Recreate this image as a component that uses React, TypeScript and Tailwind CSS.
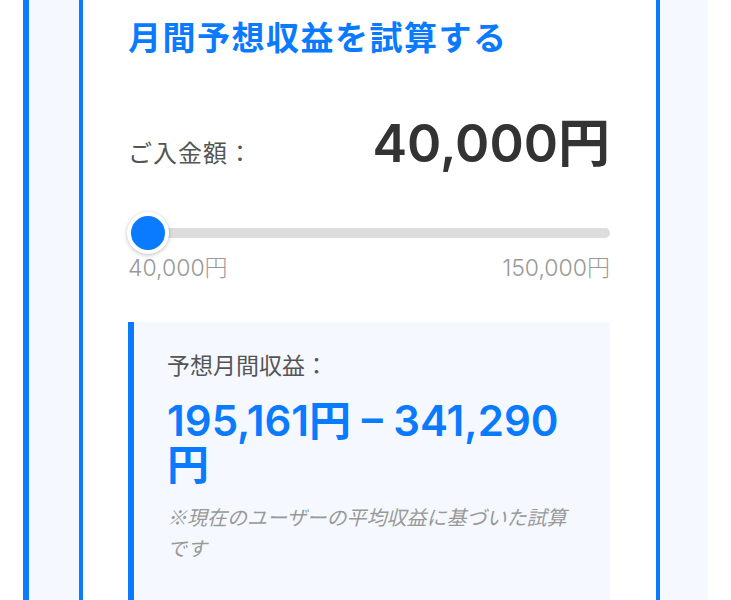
import React, { useState } from 'react'

const FONT = 'Inter, "Noto Sans CJK JP", sans-serif'
const JP = '"Noto Sans CJK JP", sans-serif'
const MIN = 40000
const MAX = 150000

const yen = (n: number) => n.toLocaleString('ja-JP') + '円'

export default function App() {
  const [amount] = useState(40000)
  const pct = ((amount - MIN) / (MAX - MIN)) * 100
  const low = 195161
  const high = 341290

  return (
    <div className="min-h-[600px] bg-white overflow-hidden" style={{ fontFamily: FONT }}>
      <div className="ml-[23px] w-[685px] min-h-[600px] border-l-[6px] border-[#0a7aff] bg-[#f5f9ff] pl-[50px] pr-[48px]">
        <div className="min-h-[600px] border-x-4 border-[#0a7aff] bg-white pl-[45px] pr-[46px] pt-[14px]">
          <h2 className="text-[33px] font-bold leading-[1.5] tracking-[1.5px] text-[#0a7aff]">
            月間予想収益を試算する
          </h2>

          {/* amount */}
          <div className="mt-[54px] flex items-baseline justify-between">
            <span className="text-[24px] tracking-[1px] text-[#555]">ご入金額：</span>
            <span className="text-[52px] font-semibold leading-none text-[#333]">{yen(amount)}</span>
          </div>

          {/* slider */}
          <div className="relative mt-[56px] h-[10px] rounded-full bg-[#dddddd]">
            <div
              className="absolute top-1/2 h-[42px] w-[42px] -translate-x-[1px] -translate-y-1/2 rounded-full border-4 border-white bg-[#0a7aff] shadow-[0_1px_4px_rgba(0,0,0,0.25)]"
              style={{ left: `calc(${pct}% - 0px)` }}
            />
          </div>
          <div className="mt-[19px] flex justify-between text-[23px] font-light leading-none text-[#999]">
            <span>{yen(MIN)}</span>
            <span>{yen(MAX)}</span>
          </div>

          {/* result */}
          <div className="mt-[42px] border-l-[6px] border-[#0a7aff] bg-[#f5f9ff] pl-[33px] pr-[33px] pt-[27px] pb-[60px]">
            <div className="text-[23px] leading-[1.5] text-[#555]">予想月間収益：</div>
            <div className="mt-[16px] text-[42px] font-semibold leading-[44px] text-[#0a7aff]">
              {yen(low)} – {yen(high)}
            </div>
            <p className="mt-[14px] text-[20px] italic leading-[31px] text-[#999]" style={{ fontFamily: JP }}>
              ※現在のユーザーの平均収益に基づいた試算です
            </p>
          </div>
        </div>
      </div>
    </div>
  )
}
